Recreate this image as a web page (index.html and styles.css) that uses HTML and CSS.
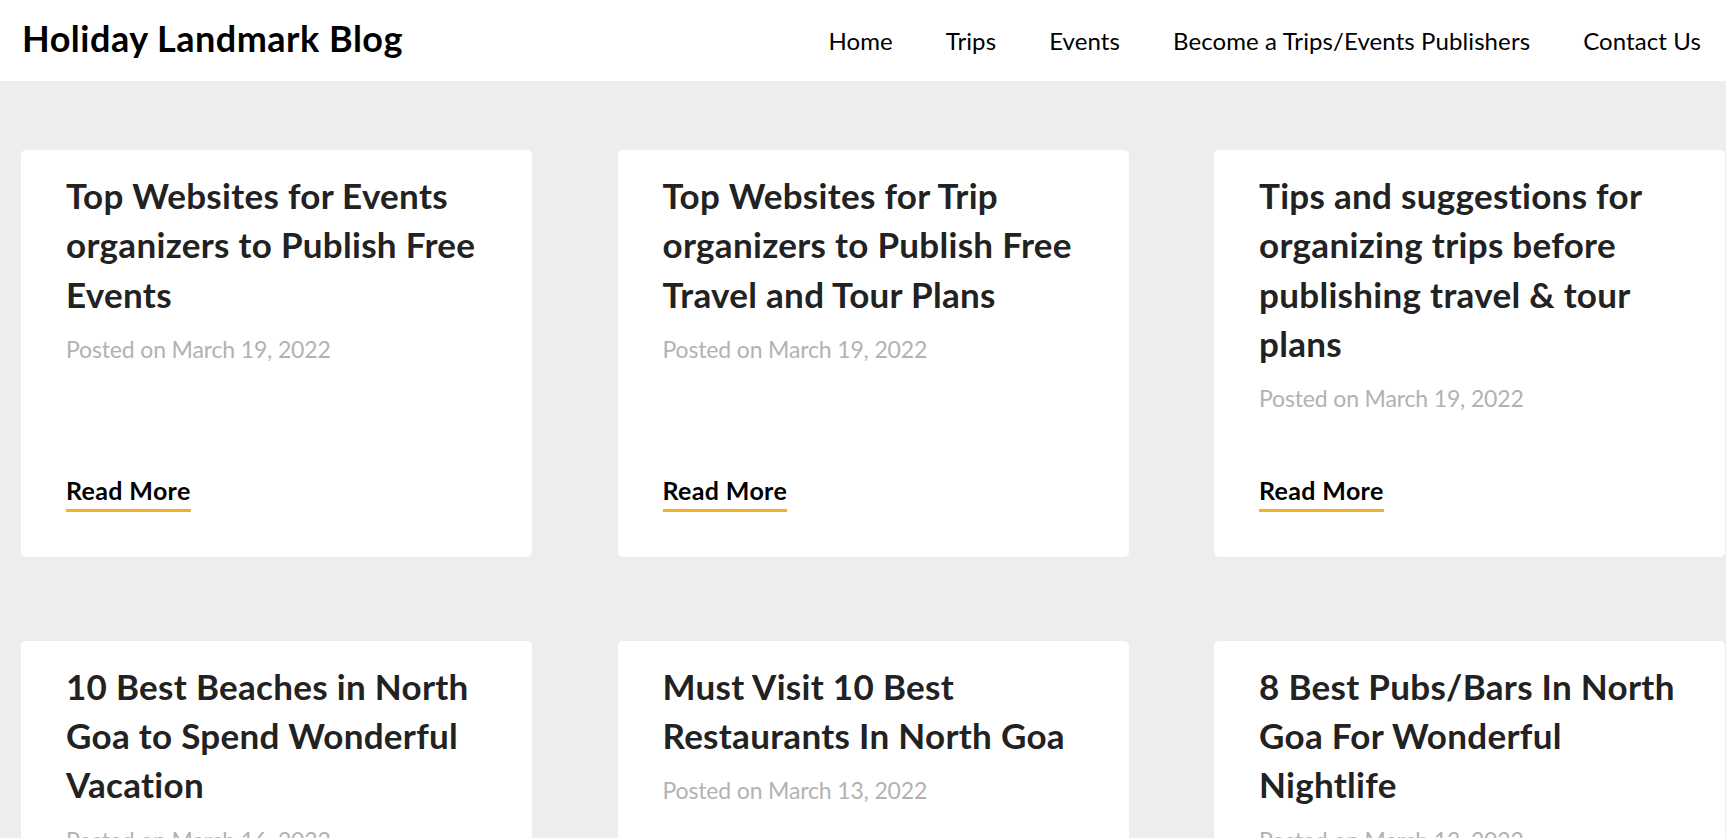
FILE: index.html
```html
<!DOCTYPE html>
<html lang="en">
<head>
<meta charset="utf-8">
<title>Holiday Landmark Blog</title>
<link rel="stylesheet" href="styles.css">
</head>
<body>
<header class="site-header">
  <a class="brand" href="#">Holiday Landmark Blog</a>
  <nav class="main-nav">
    <a href="#">Home</a>
    <a href="#">Trips</a>
    <a href="#">Events</a>
    <a href="#">Become a Trips/Events Publishers</a>
    <a href="#">Contact Us</a>
  </nav>
</header>
<main class="posts">
  <article class="card">
    <h2 class="card-title">Top Websites for Events organizers to Publish Free Events</h2>
    <p class="card-date">Posted on March 19, 2022</p>
    <a class="read-more" href="#">Read More</a>
  </article>
  <article class="card">
    <h2 class="card-title">Top Websites for Trip organizers to Publish Free Travel and Tour Plans</h2>
    <p class="card-date">Posted on March 19, 2022</p>
    <a class="read-more" href="#">Read More</a>
  </article>
  <article class="card">
    <h2 class="card-title">Tips and suggestions for organizing trips before publishing travel &amp; tour plans</h2>
    <p class="card-date">Posted on March 19, 2022</p>
    <a class="read-more" href="#">Read More</a>
  </article>
  <article class="card">
    <h2 class="card-title">10 Best Beaches in North Goa to Spend Wonderful Vacation</h2>
    <p class="card-date">Posted on March 16, 2022</p>
    <a class="read-more" href="#">Read More</a>
  </article>
  <article class="card">
    <h2 class="card-title">Must Visit 10 Best Restaurants In North Goa</h2>
    <p class="card-date">Posted on March 13, 2022</p>
    <a class="read-more" href="#">Read More</a>
  </article>
  <article class="card">
    <h2 class="card-title">8 Best Pubs/Bars In North Goa For Wonderful Nightlife</h2>
    <p class="card-date">Posted on March 13, 2022</p>
    <a class="read-more" href="#">Read More</a>
  </article>
</main>
</body>
</html>
```

FILE: styles.css
```css
* { box-sizing: border-box; }

html, body {
  margin: 0;
  padding: 0;
}

body {
  background: #ededed;
  font-family: Lato, "Liberation Sans", sans-serif;
  color: #000;
}

a { text-decoration: none; color: inherit; }

.site-header {
  height: 81px;
  background: #fff;
  display: flex;
  justify-content: space-between;
  align-items: flex-start;
  padding: 0 25px 0 22px;
}

.brand {
  font-size: 36px;
  font-weight: 700;
  line-height: 42px;
  padding-top: 17px;
  color: #000;
  letter-spacing: 0.5px;
}

.main-nav {
  display: flex;
  gap: 53px;
  padding-top: 26px;
}

.main-nav a {
  font-size: 24px;
  line-height: 29px;
  color: #000;
  letter-spacing: 0.1px;
}

.posts {
  display: grid;
  grid-template-columns: repeat(3, 511px);
  column-gap: 85.5px;
  row-gap: 83.5px;
  padding: 69px 0 40px 21px;
}

.card {
  background: #fff;
  border-radius: 5px;
  padding: 21px 45px 45px 45px;
  display: flex;
  flex-direction: column;
}

.card-title {
  margin: 0;
  font-size: 35px;
  line-height: 49.3px;
  font-weight: 700;
  color: #222;
  letter-spacing: 0.3px;
}

.card-date {
  margin: 13px 0 56px;
  font-size: 23px;
  line-height: 34px;
  color: #b2b2b2;
  letter-spacing: -0.15px;
}

.read-more {
  margin-top: auto;
  align-self: flex-start;
  font-size: 25px;
  line-height: 38px;
  font-weight: 700;
  color: #000;
  letter-spacing: 0.35px;
  border-bottom: 3px solid #f5b026;
}
```
